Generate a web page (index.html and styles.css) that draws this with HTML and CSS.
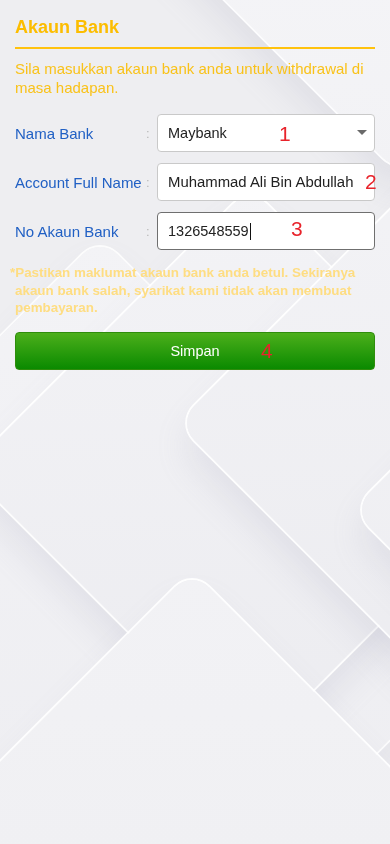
FILE: index.html
```html
<!DOCTYPE html>
<html lang="ms">
<head>
  <meta charset="UTF-8">
  <meta name="viewport" content="width=device-width, initial-scale=1">
  <title>Akaun Bank</title>
  <link rel="stylesheet" href="styles.css">
</head>
<body>
  <div class="bg">
    <div class="tile tile-f"></div>
    <div class="tile tile-a"></div>
    <div class="tile tile-e"></div>
    <div class="tile tile-b"></div>
    <div class="tile tile-c"></div>
    <div class="tile tile-d"></div>
  </div>

  <div class="page">
    <h2 class="title">Akaun Bank</h2>
    <p class="intro">Sila masukkan akaun bank anda untuk withdrawal di masa hadapan.</p>

    <form class="bank-form" onsubmit="return false">
      <div class="row">
        <label class="label" for="bank">Nama Bank</label>
        <span class="colon">:</span>
        <div class="field">
          <select id="bank" class="input select">
            <option>Maybank</option>
            <option>CIMB Bank</option>
            <option>Public Bank</option>
            <option>RHB Bank</option>
          </select>
          <span class="caret-down"></span>
          <span class="mark mark-1">1</span>
        </div>
      </div>

      <div class="row">
        <label class="label" for="fullname">Account Full Name</label>
        <span class="colon">:</span>
        <div class="field">
          <input id="fullname" class="input" type="text" value="Muhammad Ali Bin Abdullah">
          <span class="mark mark-2">2</span>
        </div>
      </div>

      <div class="row">
        <label class="label" for="accno">No Akaun Bank</label>
        <span class="colon">:</span>
        <div class="field">
          <input id="accno" class="input active" type="text" value="1326548559">
          <span class="text-cursor"></span>
          <span class="mark mark-3">3</span>
        </div>
      </div>

      <p class="notice">*Pastikan maklumat akaun bank anda betul. Sekiranya akaun bank salah, syarikat kami tidak akan membuat pembayaran.</p>

      <div class="field">
        <button class="save" type="submit">Simpan</button>
        <span class="mark mark-4">4</span>
      </div>
    </form>
  </div>
</body>
</html>
```

FILE: styles.css
```css
* {
  box-sizing: border-box;
}

html, body {
  margin: 0;
  padding: 0;
}

body {
  font-family: 'Liberation Sans', Arial, sans-serif;
  background-color: #eeeef1;
  min-height: 844px;
}

/* background decoration */
.bg {
  position: fixed;
  top: 0;
  left: 0;
  right: 0;
  bottom: 0;
  overflow: hidden;
  z-index: 0;
}

.tile {
  position: absolute;
  width: 400px;
  height: 400px;
  border-radius: 24px;
  transform: rotate(45deg);
  background: linear-gradient(135deg, #f3f3f6 0%, #ececf0 100%);
  box-shadow: 0 0 0 2px rgba(255,255,255,0.9), 16px 16px 34px rgba(150,150,175,0.16);
}

.tile-f {
  left: -180px;
  top: 353px;
  width: 560px;
  height: 560px;
  box-shadow: 0 0 0 2px rgba(255,255,255,0.8), 10px 10px 30px rgba(150,150,175,0.1);
}
.tile-a { left: 50px; top: 270px; }
.tile-e { left: 200px; top: -308px; background: linear-gradient(135deg, #f8f8fa 0%, #f2f2f5 100%); }
.tile-b { left: 260px; top: 223px; }
.tile-c { left: 435px; top: 310px; }
.tile-d { left: -8px; top: 653px; background: linear-gradient(135deg, #f2f2f5 0%, #eeeef1 100%); }

.page {
  position: relative;
  z-index: 1;
  padding: 16px 15px 0;
}

.title {
  margin: 0;
  font-size: 18px;
  font-weight: bold;
  color: #fcbd00;
  line-height: 22px;
  padding-bottom: 9px;
  border-bottom: 2px solid #ffc20e;
}

.intro {
  margin: 10px 0 0;
  font-size: 15px;
  line-height: 19px;
  color: #f9c21a;
}

.bank-form {
  margin-top: 17px;
}

.row {
  display: flex;
  align-items: center;
  height: 38px;
  margin-bottom: 11px;
}

.label {
  width: 131px;
  font-size: 15px;
  color: #2160c4;
}

.colon {
  width: 11px;
  color: #b8b8b8;
  font-size: 13px;
}

.field {
  position: relative;
  flex: 1;
  height: 38px;
}

.input {
  width: 100%;
  height: 38px;
  padding: 0 10px;
  font-family: inherit;
  font-size: 14.5px;
  color: #222;
  background: #fff;
  border: 1px solid #c9c9c9;
  border-radius: 4px;
  outline: none;
}

#fullname {
  font-size: 14.9px;
}

.input.active {
  border-color: #6f6f6f;
}

.select {
  appearance: none;
  -webkit-appearance: none;
}

.caret-down {
  position: absolute;
  right: 8px;
  top: 16px;
  border-left: 5px solid transparent;
  border-right: 5px solid transparent;
  border-top: 5px solid #6a6a6a;
}

.text-cursor {
  position: absolute;
  left: 93px;
  top: 11px;
  width: 1px;
  height: 17px;
  background: #111;
}

.mark {
  position: absolute;
  font-size: 21px;
  line-height: 24px;
  color: #e8232b;
  pointer-events: none;
}

.mark-1 { left: 122px; top: 8px; }
.mark-2 { left: 208px; top: 7px; }
.mark-3 { left: 134px; top: 5px; }
.mark-4 { left: 246px; top: 7px; }

.notice {
  margin: 14px 0 15px;
  padding-left: 0;
  text-indent: -5px;
  font-size: 13.4px;
  font-weight: bold;
  line-height: 17.5px;
  color: #fedd82;
}

.save {
  width: 100%;
  height: 38px;
  font-family: inherit;
  font-size: 14.5px;
  color: #fff;
  border: 1px solid #2f8d0c;
  border-radius: 4px;
  background: linear-gradient(to bottom, #4caf1b 0%, #0a8a00 100%);
  cursor: pointer;
}
```
